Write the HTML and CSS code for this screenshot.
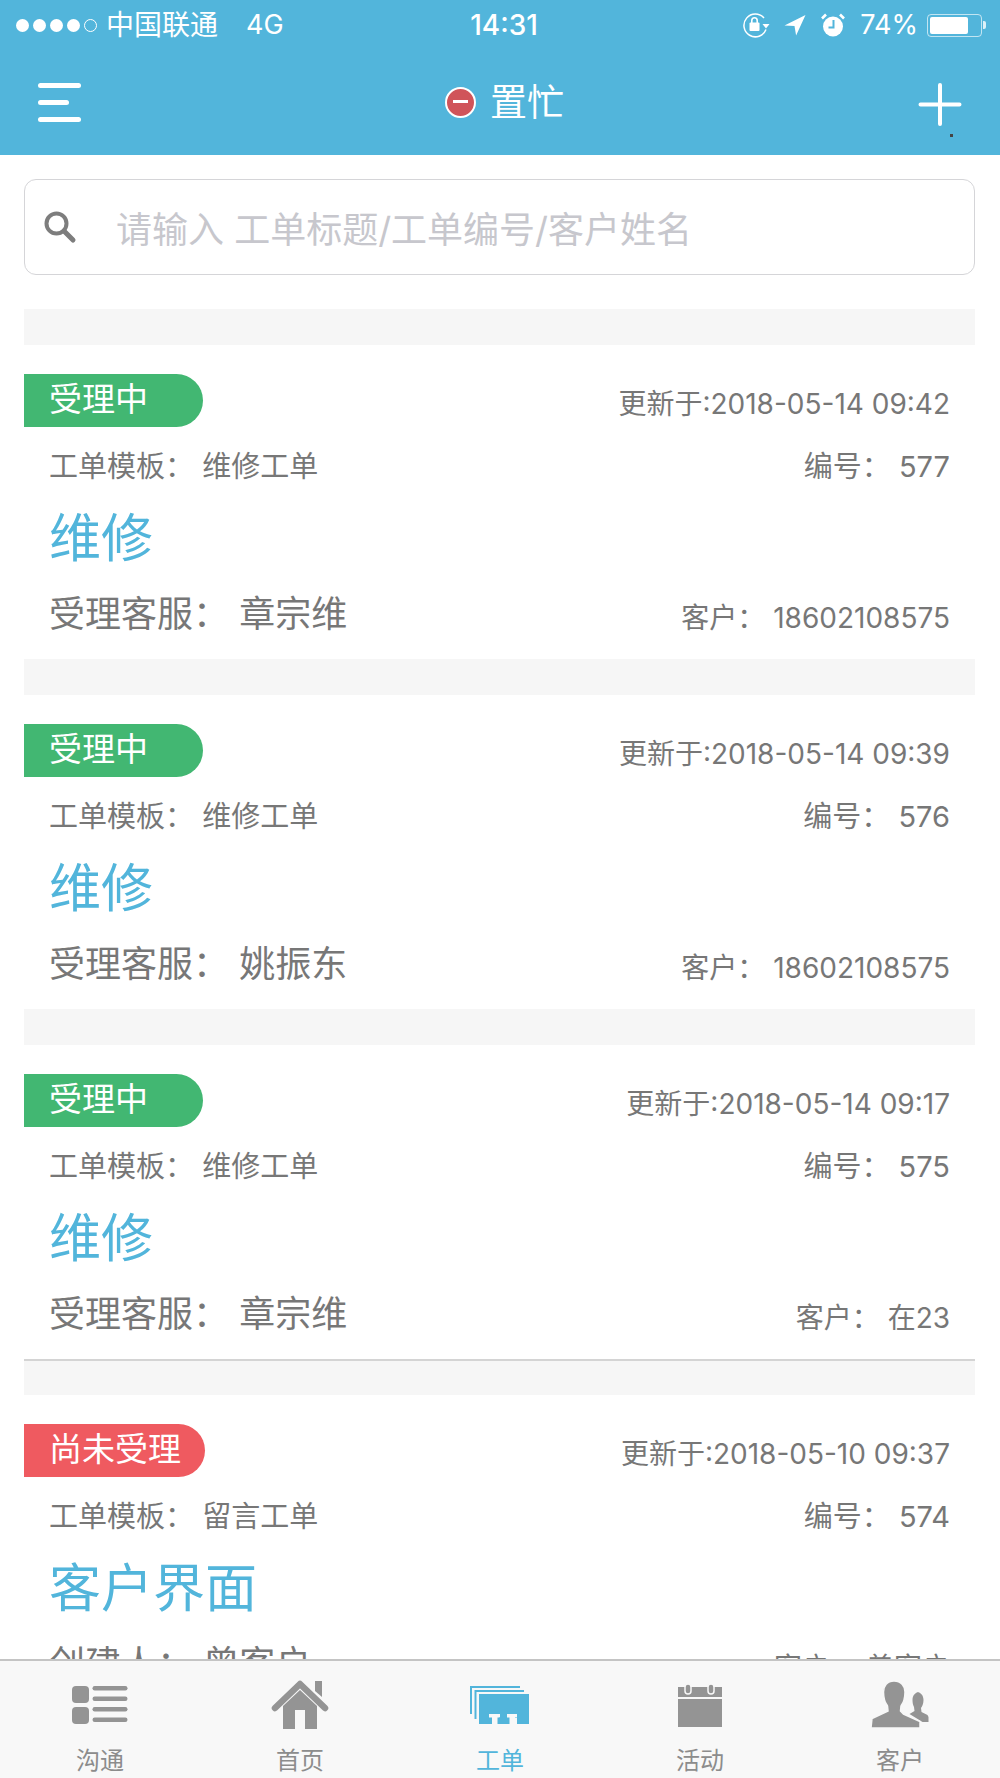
FILE: index.html
```html
<!DOCTYPE html>
<html lang="zh-CN">
<head>
<meta charset="utf-8">
<title>工单</title>
<link rel="stylesheet" href="styles.css">
</head>
<body>
<div class="app">
  <header class="header">
    <div class="status">
      <div class="status-left">
        <span class="signal"><i></i><i></i><i></i><i></i><i class="off"></i></span>
        <span class="carrier">中国联通</span>
        <span class="network">4G</span>
      </div>
      <div class="clock">14:31</div>
      <div class="status-right">
        <svg class="ico-rotate" viewBox="0 0 28 26" width="28" height="26">
          <path d="M24 17.5A11.4 11.4 0 1 1 22 6" fill="none" stroke="#fff" stroke-width="1.5"/>
          <path d="M20.5 12h7l-3.5 4.5z" fill="#fff"/>
          <rect x="7.5" y="10.5" width="10" height="8.5" rx="1" fill="#fff"/>
          <path d="M9.8 11V8.5a2.7 2.7 0 0 1 5.4 0V11" fill="none" stroke="#fff" stroke-width="1.6"/>
        </svg>
        <svg class="ico-arrow" viewBox="0 0 22 22" width="22" height="22">
          <path d="M21.5 1 .5 11.6l10 .4 1.6 9.6z" fill="#fff"/>
        </svg>
        <svg class="ico-alarm" viewBox="0 0 24 24" width="24" height="24">
          <circle cx="12" cy="13.5" r="10" fill="#fff"/>
          <path d="M1 5.5 5 1.5M23 5.5l-4-4" stroke="#fff" stroke-width="2.6"/>
          <path d="M12.5 7v7.5H7.5" fill="none" stroke="#52b5db" stroke-width="2"/>
        </svg>
        <span class="battery-pct">74%</span>
        <span class="battery"><span class="battery-fill"></span></span>
        <span class="battery-tip"></span>
      </div>
    </div>
    <nav class="nav">
      <div class="menu"><i></i><i class="short"></i><i></i></div>
      <div class="presence">
        <span class="busy"></span>
        <span class="presence-text">置忙</span>
      </div>
      <svg class="plus" viewBox="0 0 46 60" width="46" height="60">
        <path d="M23 3v39M3.500 22.500h39" stroke="#fff" stroke-width="4" stroke-linecap="round"/>
        <rect x="33" y="52" width="3" height="3" fill="#444"/>
      </svg>
    </nav>
  </header>

  <main class="content">
    <div class="search">
      <svg class="search-ico" viewBox="0 0 34 34" width="34" height="34">
        <circle cx="13.500" cy="13.500" r="10" fill="none" stroke="#7d7d7d" stroke-width="4"/>
        <path d="M21 21l9 9" stroke="#7d7d7d" stroke-width="5" stroke-linecap="round"/>
      </svg>
      <span class="placeholder">请输入 工单标题/工单编号/客户姓名</span>
    </div>

    <div class="gap"></div>
    <article class="ticket">
      <div class="row-top">
        <span class="badge">受理中</span>
        <span class="updated">更新于:2018-05-14 09:42</span>
      </div>
      <div class="row-meta"><span>工单模板： 维修工单</span><span>编号： 577</span></div>
      <h2 class="ticket-title">维修</h2>
      <div class="row-people"><span class="agent">受理客服： 章宗维</span><span class="customer">客户： 18602108575</span></div>
    </article>

    <div class="gap"></div>
    <article class="ticket">
      <div class="row-top">
        <span class="badge">受理中</span>
        <span class="updated">更新于:2018-05-14 09:39</span>
      </div>
      <div class="row-meta"><span>工单模板： 维修工单</span><span>编号： 576</span></div>
      <h2 class="ticket-title">维修</h2>
      <div class="row-people"><span class="agent">受理客服： 姚振东</span><span class="customer">客户： 18602108575</span></div>
    </article>

    <div class="gap"></div>
    <article class="ticket">
      <div class="row-top">
        <span class="badge">受理中</span>
        <span class="updated">更新于:2018-05-14 09:17</span>
      </div>
      <div class="row-meta"><span>工单模板： 维修工单</span><span>编号： 575</span></div>
      <h2 class="ticket-title">维修</h2>
      <div class="row-people"><span class="agent">受理客服： 章宗维</span><span class="customer">客户： 在23</span></div>
    </article>

    <div class="gap gap-ruled"></div>
    <article class="ticket">
      <div class="row-top">
        <span class="badge badge-new">尚未受理</span>
        <span class="updated">更新于:2018-05-10 09:37</span>
      </div>
      <div class="row-meta"><span>工单模板： 留言工单</span><span>编号： 574</span></div>
      <h2 class="ticket-title">客户界面</h2>
      <div class="row-people"><span class="agent">创建人： 曾客户</span><span class="customer">客户： 曾客户</span></div>
    </article>
  </main>

  <footer class="tabs">
    <div class="tab">
      <svg viewBox="0 0 60 50" width="60" height="50" fill="#949494">
        <rect x="2" y="6" width="17" height="17" rx="4"/>
        <rect x="2" y="27" width="17" height="17" rx="4"/>
        <rect x="22.500" y="6" width="35" height="4.500" rx="2.200"/>
        <rect x="22.500" y="16.500" width="35" height="4.500" rx="2.200"/>
        <rect x="22.500" y="27" width="35" height="4.500" rx="2.200"/>
        <rect x="22.500" y="37.500" width="35" height="4.500" rx="2.200"/>
      </svg>
      <span>沟通</span>
    </div>
    <div class="tab">
      <svg viewBox="0 0 60 50" width="60" height="50" fill="#949494">
        <path d="M45 1h7v16l-7-6z"/>
        <path d="M13 26 30 10l17 16v23H35V30H25v19H13z"/>
        <path d="M5 28 30 4l25 24" fill="none" stroke="#949494" stroke-width="6.500" stroke-linecap="round" stroke-linejoin="round"/>
      </svg>
      <span>首页</span>
    </div>
    <div class="tab tab-active">
      <svg viewBox="0 0 60 50" width="60" height="50">
        <path d="M0 6h50v2H2v26H0z" fill="#52b5db"/>
        <path d="M4.500 10H54v2H6.500v27h-2z" fill="#52b5db"/>
        <path d="M9 14h50v30H47V37.500h-2V34H57v0H37v3.500h3V44H27v-6.500h2.500V34H19v3.500h3V44H9z" fill="#52b5db"/>
        <path d="M20 34h10v3h-2.500v7h-5v-7H20zM37 34h10v3h-2.500v7h-5v-7H37z" fill="#f8f8f8"/>
      </svg>
      <span>工单</span>
    </div>
    <div class="tab">
      <svg viewBox="0 0 60 50" width="60" height="50" fill="#949494">
        <rect x="8" y="7" width="44" height="10"/>
        <rect x="8" y="19" width="44" height="28"/>
        <rect x="15" y="4" width="6" height="10" rx="3" stroke="#f8f8f8" stroke-width="1.500"/>
        <rect x="38" y="4" width="6" height="10" rx="3" stroke="#f8f8f8" stroke-width="1.500"/>
      </svg>
      <span>活动</span>
    </div>
    <div class="tab">
      <svg viewBox="0 0 60 50" width="60" height="50" fill="#949494">
        <path d="M50 12c-4.500 0-7.500 3-7.500 8 0 3 .5 5 1.500 7l.5 4-5 3 13 8h6v-5l-1-2-6-3-.5-4c1-1.500 2.500-4 2.500-8 0-5-3-8-7.500-8z" />
        <path d="M24 1c-7 0-10.500 5-10.500 11 0 4 .5 6 1 8 .7 3 2 4 3 6l.5 5-16 7.500L1 48h49V41.500L33.500 34l-3-3 .5-5c1-2 2.300-3 3-6 .5-2 1-4 1-8C35 6 31 1 24 1z" stroke="#f8f8f8" stroke-width="1.500"/>
      </svg>
      <span>客户</span>
    </div>
  </footer>
</div>
</body>
</html>
```

FILE: styles.css
```css
* { box-sizing: border-box; }

html, body {
  margin: 0;
  padding: 0;
  background: #fff;
}

.app {
  width: 1000px;
  height: 1778px;
  display: flex;
  flex-direction: column;
  overflow: hidden;
  font-family: Inter, "Noto Sans CJK SC", sans-serif;
  color: #777;
}

/* Blue header: system status strip and navigation */
.header {
  height: 155px;
  flex: none;
  background: #52b5db;
  color: #fff;
}

.status {
  height: 50px;
  padding: 0 14px 0 16px;
  display: grid;
  grid-template-columns: 1fr auto 1fr;
  align-items: center;
}

.status-left,
.status-right {
  display: flex;
  align-items: center;
}

.status-right { justify-content: flex-end; }

.signal {
  display: flex;
  gap: 4px;
}

.signal i {
  width: 13px;
  height: 13px;
  border-radius: 50%;
  background: #fff;
}

.signal .off {
  background: none;
  border: 1px solid #fff;
}

.carrier {
  margin-left: 9px;
  font-size: 28px;
  line-height: 36px;
}

.network {
  margin-left: 28px;
  font-size: 27px;
  line-height: 36px;
}

.clock {
  margin-left: 6px;
  font-size: 28px;
  font-weight: 500;
  line-height: 36px;
}

.ico-rotate { margin-right: 14px; }
.ico-arrow { margin-right: 15px; }
.ico-alarm { margin-right: 15px; }

.battery-pct {
  font-size: 27px;
  line-height: 36px;
  margin-right: 9px;
}

.battery {
  width: 55px;
  height: 23px;
  padding: 2px;
  border: 1px solid rgba(255, 255, 255, .65);
  border-radius: 4px;
}

.battery-fill {
  display: block;
  width: 38px;
  height: 100%;
  background: #fff;
  border-radius: 2px;
}

.battery-tip {
  width: 3px;
  height: 8px;
  margin-left: 1px;
  background: rgba(255, 255, 255, .8);
  border-radius: 0 2px 2px 0;
}

.nav {
  height: 105px;
  padding: 0 37px 0 38px;
  display: grid;
  grid-template-columns: 1fr auto 1fr;
  align-items: center;
}

.menu {
  display: flex;
  flex-direction: column;
  gap: 12px;
  width: 43px;
}

.menu i {
  height: 5px;
  border-radius: 2.5px;
  background: #fff;
}

.menu .short { width: 31px; }

.presence {
  display: flex;
  align-items: center;
  gap: 14px;
  margin-left: 8px;
}

.busy {
  position: relative;
  width: 31px;
  height: 31px;
  border-radius: 50%;
  background: #d0545a;
  border: 2px solid #fff;
}

.busy::after {
  content: "";
  position: absolute;
  left: 6px;
  right: 6px;
  top: 11px;
  height: 3px;
  background: #fff;
}

.presence-text {
  font-size: 37px;
  line-height: 44px;
}

.plus {
  justify-self: end;
  margin-top: 19px;
}

.content {
  flex: 1;
  min-height: 0;
  overflow: hidden;
  padding: 24px 25px 0 24px;
}

.search {
  height: 96px;
  display: flex;
  align-items: center;
  padding-left: 18px;
  border: 1px solid #d5d5d8;
  border-radius: 12px;
}

.search-ico { flex: none; }

.placeholder {
  margin-left: 39px;
  font-size: 36px;
  color: #c7c7cd;
  white-space: nowrap;
}

.gap {
  height: 36px;
  background: #f6f6f6;
}

.search + .gap { margin-top: 34px; }

.gap-ruled { border-top: 2px solid #d4d4d4; }

.ticket {
  height: 314px;
  padding-top: 29px;
}

.row-top {
  height: 53px;
  display: flex;
  justify-content: space-between;
  align-items: flex-start;
}

.badge {
  min-width: 179px;
  height: 53px;
  padding: 0 24px 0 25px;
  background: #42b772;
  color: #fff;
  font-size: 33px;
  line-height: 50px;
  border-radius: 0 27px 27px 0;
}

.badge-new { background: #ef5a60; }

.updated {
  margin: 12px 25px 0 0;
  font-size: 28px;
  line-height: 36px;
  white-space: nowrap;
}

.row-meta {
  height: 36px;
  margin-top: 22px;
  padding: 0 25px;
  display: flex;
  justify-content: space-between;
  font-size: 29px;
  line-height: 36px;
}

.ticket-title {
  margin: 24px 0 0;
  padding-left: 25px;
  color: #52b5db;
  font-size: 52px;
  font-weight: 400;
  line-height: 60px;
}

.row-people {
  height: 36px;
  margin-top: 27px;
  padding: 0 25px;
  display: flex;
  justify-content: space-between;
  line-height: 36px;
}

.agent { font-size: 36px; }

.customer {
  font-size: 28px;
  margin-top: 4px;
}

/* Bottom tab bar */
.tabs {
  height: 119px;
  flex: none;
  display: grid;
  grid-template-columns: repeat(5, 1fr);
  background: #f8f8f8;
  border-top: 2px solid #c4c4c4;
  position: relative;
}

.tab {
  display: flex;
  flex-direction: column;
  align-items: center;
  padding-top: 19px;
  color: #8c8c8c;
  font-size: 24px;
  line-height: 30px;
}

.tab svg { flex: none; margin-bottom: 16px; }

.tab-active { color: #52b5db; }
```
